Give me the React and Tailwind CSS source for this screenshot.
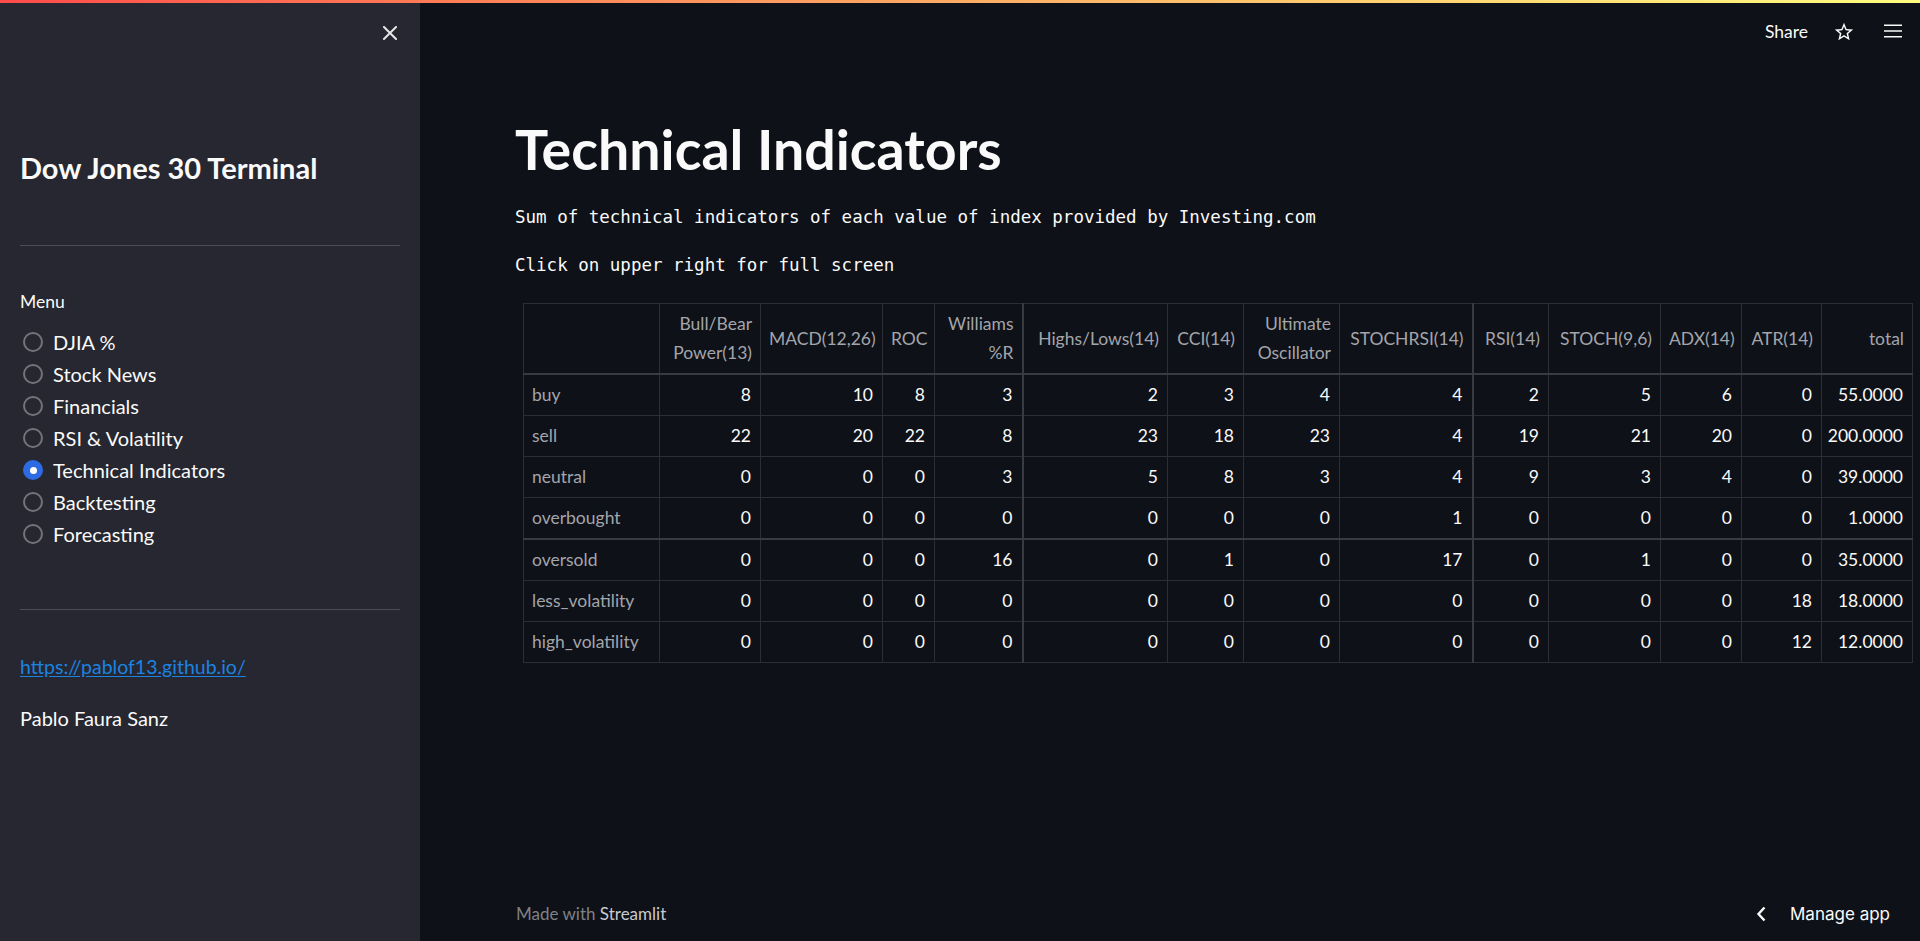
import React from "react";

const menuItems = [
  "DJIA %",
  "Stock News",
  "Financials",
  "RSI & Volatility",
  "Technical Indicators",
  "Backtesting",
  "Forecasting",
];

// column widths measured from the screenshot
const columns = [
  { label: ["Bull/Bear", "Power(13)"], w: "w-[101px]" },
  { label: ["MACD(12,26)"], w: "w-[122px]" },
  { label: ["ROC"], w: "w-[52px]" },
  { label: ["Williams", "%R"], w: "w-[88px]", thick: true },
  { label: ["Highs/Lows(14)"], w: "w-[145px]" },
  { label: ["CCI(14)"], w: "w-[76px]" },
  { label: ["Ultimate", "Oscillator"], w: "w-[96px]" },
  { label: ["STOCHRSI(14)"], w: "w-[133px]", thick: true },
  { label: ["RSI(14)"], w: "w-[76px]" },
  { label: ["STOCH(9,6)"], w: "w-[112px]" },
  { label: ["ADX(14)"], w: "w-[81px]" },
  { label: ["ATR(14)"], w: "w-[80px]" },
  { label: ["total"], w: "w-[91px]" },
];

const rows = [
  { name: "buy", h: "h-[42px]", values: [8, 10, 8, 3, 2, 3, 4, 4, 2, 5, 6, 0, "55.0000"] },
  { name: "sell", h: "h-[41px]", values: [22, 20, 22, 8, 23, 18, 23, 4, 19, 21, 20, 0, "200.0000"] },
  { name: "neutral", h: "h-[41px]", values: [0, 0, 0, 3, 5, 8, 3, 4, 9, 3, 4, 0, "39.0000"] },
  { name: "overbought", h: "h-[41px]", values: [0, 0, 0, 0, 0, 0, 0, 1, 0, 0, 0, 0, "1.0000"], thick: true },
  { name: "oversold", h: "h-[42px]", values: [0, 0, 0, 16, 0, 1, 0, 17, 0, 1, 0, 0, "35.0000"] },
  { name: "less_volatility", h: "h-[41px]", values: [0, 0, 0, 0, 0, 0, 0, 0, 0, 0, 0, 18, "18.0000"] },
  { name: "high_volatility", h: "h-[41px]", values: [0, 0, 0, 0, 0, 0, 0, 0, 0, 0, 0, 12, "12.0000"] },
];

const Radio = ({ label, checked }) => (
  <div className="h-[32px] flex items-center gap-[10px] pl-[3px]">
    {checked ? (
      <span className="w-[20px] h-[20px] rounded-full bg-[#2d6be4] flex items-center justify-center">
        <span className="w-[7px] h-[7px] rounded-full bg-white" />
      </span>
    ) : (
      <span className="w-[20px] h-[20px] rounded-full border-2 border-[#737479]" />
    )}
    <span className="text-[20px] leading-[28px] text-[#fafafa]">{label}</span>
  </div>
);

const Sidebar = () => (
  <aside className="w-[420px] shrink-0 bg-[#262730] px-[20px] flex flex-col">
    <div className="pt-[23px] h-[37px] flex justify-end pr-[3px]">
      <svg width="14" height="14" viewBox="0 0 14 14" className="text-[#e6e6e8]">
        <path d="M1 1 L13 13 M13 1 L1 13" stroke="currentColor" strokeWidth="2" strokeLinecap="square" />
      </svg>
    </div>

    <h1 className="mt-[111px] text-[29px] leading-[34px] font-bold text-[#fafafa]">
      Dow Jones 30 Terminal
    </h1>

    <div className="mt-[60px] h-px bg-[#4b4c55]" />

    <div className="mt-[44px] text-[17.5px] leading-[24px] text-[#fafafa]">Menu</div>

    <div className="mt-[12px] flex flex-col">
      {menuItems.map((item) => (
        <Radio key={item} label={item} checked={item === "Technical Indicators"} />
      ))}
    </div>

    <div className="mt-[59px] h-px bg-[#4b4c55]" />

    <a
      href="https://pablof13.github.io/"
      className="mt-[42px] text-[19.5px] leading-[30px] text-[#1c83e1] underline underline-offset-2 self-start"
    >
      https://pablof13.github.io/
    </a>

    <p className="mt-[21px] text-[20px] leading-[30px] text-[#fafafa]">Pablo Faura Sanz</p>
  </aside>
);

const Toolbar = () => (
  <div className="h-[58px] flex items-center justify-end pr-[15px] text-[#fafafa]">
    <span className="text-[17.5px] leading-[24px]">Share</span>
    <svg width="22" height="22" viewBox="0 0 24 24" className="ml-[25px]" fill="currentColor">
      <path d="M22 9.24l-7.19-.62L12 2 9.19 8.63 2 9.24l5.46 4.73L5.82 21 12 17.27 18.18 21l-1.63-7.03L22 9.24zM12 15.4l-3.76 2.27 1-4.28-3.32-2.88 4.38-.38L12 6.1l1.71 4.04 4.38.38-3.32 2.88 1 4.28L12 15.4z" />
    </svg>
    <svg width="24" height="24" viewBox="0 0 24 24" className="ml-[26px]" fill="currentColor">
      <path d="M3 17.5h18v-1.6H3v1.6zm0-5.7h18v-1.6H3v1.6zm0-7.3v1.6h18V4.5H3z" />
    </svg>
  </div>
);

const IndicatorTable = () => (
  <table className="ml-[8px] mt-[26px] table-fixed border-collapse w-[1389px] text-[17.5px]">
    <colgroup>
      <col className="w-[136px]" />
      {columns.map((c) => (
        <col key={c.label.join(" ")} className={c.w} />
      ))}
    </colgroup>
    <thead>
      <tr className="h-[70px] border-b-2 border-[#393b42]">
        <th className="border border-[#2c2e34]" />
        {columns.map((c) => (
          <th
            key={c.label.join(" ")}
            className={`border border-[#2c2e34] px-[8px] text-right font-normal text-[#a3a5ab] leading-[29px] whitespace-nowrap ${
              c.thick ? "border-r-2 border-r-[#393b42]" : ""
            }`}
          >
            {c.label.map((line, i) => (
              <div key={i}>{line}</div>
            ))}
          </th>
        ))}
      </tr>
    </thead>
    <tbody>
      {rows.map((r) => (
        <tr key={r.name} className={`${r.h} ${r.thick ? "border-b-2 border-[#393b42]" : ""}`}>
          <th className="border border-[#2c2e34] pl-[8px] text-left font-normal text-[#a3a5ab] whitespace-nowrap">
            {r.name}
          </th>
          {r.values.map((v, i) => (
            <td
              key={i}
              className={`border border-[#2c2e34] pr-[9px] text-right text-[#fafafa] ${
                columns[i].thick ? "border-r-2 border-r-[#393b42]" : ""
              }`}
            >
              {v}
            </td>
          ))}
        </tr>
      ))}
    </tbody>
  </table>
);

const Footer = () => (
  <div className="h-[58px] shrink-0 flex items-center justify-between pt-[3px] pl-[96px] pr-[30px]">
    <p className="text-[17px] leading-[24px] text-[#7f8187]">
      Made with <span className="text-[#c9cace]">Streamlit</span>
    </p>
    <div className="flex items-center gap-[24px] text-[#fafafa] [font-family:Inter,sans-serif]">
      <svg width="10" height="16" viewBox="0 0 10 16">
        <path d="M8.5 1.5 L2.5 8 L8.5 14.5" fill="none" stroke="currentColor" strokeWidth="2.4" />
      </svg>
      <span className="text-[17px] leading-[24px]">Manage app</span>
    </div>
  </div>
);

export default function App() {
  return (
    <div className="w-full h-[941px] flex flex-col overflow-hidden bg-[#0e1117] [font-family:Lato,'Noto_Sans',sans-serif]">
      <div className="h-[3px] shrink-0 bg-gradient-to-r from-[#ff4b4b] to-[#fffd80]" />
      <div className="flex-1 flex min-h-0">
        <Sidebar />
        <main className="flex-1 flex flex-col min-w-0">
          <Toolbar />
          <div className="flex-1 pl-[95px]">
            <h1 className="mt-[55px] text-[55.5px] leading-[66px] font-bold text-[#fafafa]">
              Technical Indicators
            </h1>
            <p className="mt-[23px] text-[17.5px] leading-[24px] text-[#fafafa] [font-family:'DejaVu_Sans_Mono',monospace]">
              Sum of technical indicators of each value of index provided by Investing.com
            </p>
            <p className="mt-[24px] text-[17.5px] leading-[24px] text-[#fafafa] [font-family:'DejaVu_Sans_Mono',monospace]">
              Click on upper right for full screen
            </p>
            <IndicatorTable />
          </div>
          <Footer />
        </main>
      </div>
    </div>
  );
}
